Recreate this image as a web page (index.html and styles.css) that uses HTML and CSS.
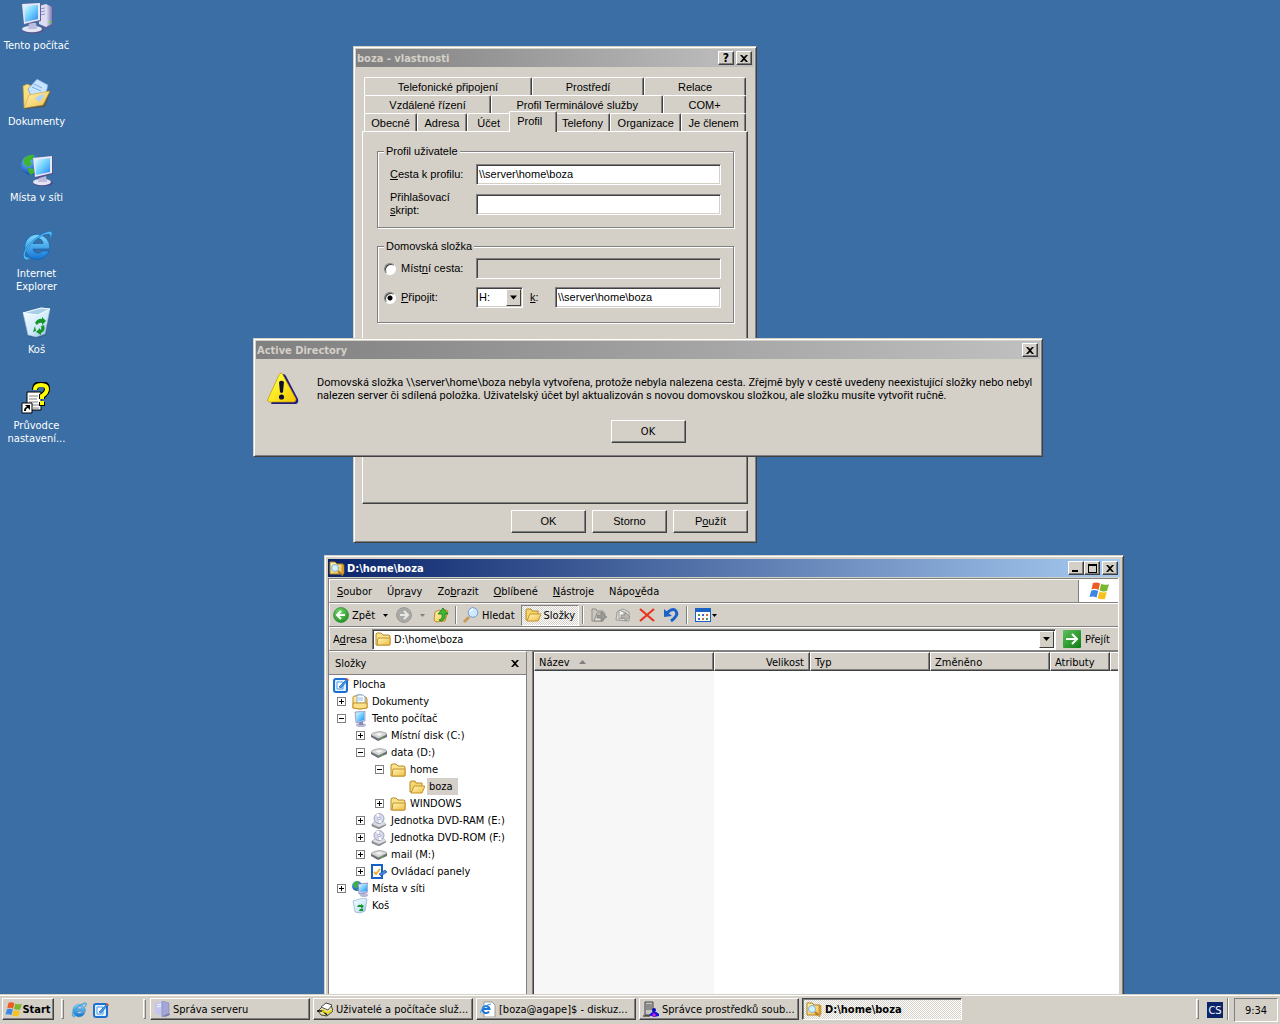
FILE: index.html
```html
<!DOCTYPE html>
<html lang="cs">
<head>
  <meta charset="UTF-8" />
  <meta name="viewport" content="width=device-width, initial-scale=1.0"/>
  <title>Plocha</title>
  <link rel="stylesheet" href="styles.css">
</head>
<body>
  <!-- Icon set -->
  <svg class="sprite" aria-hidden="true">
    <defs>
      <linearGradient id="g-screen" x1="0" y1="0" x2="1" y2="1">
        <stop offset="0" stop-color="#e4fbff"/><stop offset="0.5" stop-color="#6fd0ff"/><stop offset="1" stop-color="#2a86ee"/>
      </linearGradient>
      <linearGradient id="g-case" x1="0" y1="0" x2="1" y2="0">
        <stop offset="0" stop-color="#e4e4f4"/><stop offset="1" stop-color="#7c7cb4"/>
      </linearGradient>
      <linearGradient id="g-folder" x1="0" y1="0" x2="1" y2="1">
        <stop offset="0" stop-color="#fff6b8"/><stop offset="1" stop-color="#f0bd45"/>
      </linearGradient>
      <linearGradient id="g-ie" x1="0" y1="0" x2="0" y2="1">
        <stop offset="0" stop-color="#7ddcff"/><stop offset="1" stop-color="#1273d2"/>
      </linearGradient>
      <radialGradient id="g-globe" cx="0.35" cy="0.3" r="0.8">
        <stop offset="0" stop-color="#6fc4ff"/><stop offset="1" stop-color="#0a3aa8"/>
      </radialGradient>
      <linearGradient id="g-bin" x1="0" y1="0" x2="1" y2="1">
        <stop offset="0" stop-color="#f6fdff"/><stop offset="0.6" stop-color="#cfeafa"/><stop offset="1" stop-color="#86b8dc"/>
      </linearGradient>
      <linearGradient id="g-warn" x1="0" y1="0" x2="1" y2="1">
        <stop offset="0.2" stop-color="#ffff3c"/><stop offset="1" stop-color="#f6c400"/>
      </linearGradient>
      <linearGradient id="g-go" x1="0" y1="0" x2="1" y2="1">
        <stop offset="0" stop-color="#5cc05c"/><stop offset="1" stop-color="#0d7d12"/>
      </linearGradient>
      <radialGradient id="g-back" cx="0.4" cy="0.3" r="0.8">
        <stop offset="0" stop-color="#7ad86c"/><stop offset="1" stop-color="#158a1c"/>
      </radialGradient>
    </defs>

    <symbol id="computer-big" viewBox="0 0 32 32">
      <path d="M18 3l8-1 6 3v18l-7 4-7-4z" fill="#5c5c98"/>
      <path d="M18 4l7-2v23l-7-3z" fill="#dcdcf2"/>
      <path d="M25 2l6 3v17l-6 3z" fill="url(#g-case)"/>
      <path d="M19 7l5-1M19 10l5-1M19 13l5-1" stroke="#9292bd"/>
      <circle cx="29" cy="20" r="1.200" fill="#5fe02c"/>
      <ellipse cx="12" cy="28" rx="11" ry="3.500" fill="#55558c"/>
      <ellipse cx="11" cy="27" rx="10" ry="3.200" fill="#e4e4f4"/>
      <path d="M8 21h7l1 6H7z" fill="#bcbcdc"/>
      <path d="M1 2l19-1v18l-17 4z" fill="#62629c"/>
      <path d="M1 2l18-1v17L3 22z" fill="#e8e8f8"/>
      <path d="M3 4l14-1v14L4 20z" fill="url(#g-screen)"/>
    </symbol>
    <symbol id="documents-big" viewBox="0 0 32 32">
      <path d="M3 31L2 9l4-2 5 2 16 4 3-1-6 17z" fill="#604a1c" opacity=".6"/>
      <path d="M2 8l4-2 5 2v3l13 1v12L3 30z" fill="#f9dd80" stroke="#b88d2e" stroke-width=".6"/>
      <path d="M7 11l9-10 11 6-4 17-9 1z" fill="#c8e4ff" stroke="#5e9be0" stroke-width=".7"/>
      <path d="M13 6l8 4M11 9l9 4" stroke="#70aef0"/>
      <path d="M3 30l5-13 21-4-7 14z" fill="url(#g-folder)" stroke="#c79c35" stroke-width=".6"/>
      <path d="M14 20l8-4 1 2-5 6z" fill="#a9d4ff"/>
    </symbol>
    <symbol id="network-big" viewBox="0 0 32 32">
      <circle cx="10" cy="11" r="10" fill="url(#g-globe)"/>
      <path d="M2 6q5-6 11-5l-1 4-3 2 2 3-4 3-3-2zM7 14l6 1v4l-3 2q-3-2-3-7zM15 3l4 3-2 5-4-3z" fill="#3fb52d"/>
      <ellipse cx="22" cy="29" rx="10" ry="3.500" fill="#4c4c88"/>
      <ellipse cx="21" cy="28" rx="9" ry="3.200" fill="#e4e4f4"/>
      <path d="M18 22h7l1 6h-9z" fill="#bcbcdc"/>
      <path d="M12 5l20-3v18l-17 5z" fill="#54548e"/>
      <path d="M12 4l19-2v17l-17 4z" fill="#e8e8f8"/>
      <path d="M14 6l15-2v14l-14 3z" fill="url(#g-screen)"/>
    </symbol>
    <symbol id="ie" viewBox="0 0 32 32">
      <path d="M28 19H12a5 5 0 0 0 9 2h7A12.500 12.500 0 1 1 28.500 19zM12 13.500h10a5 5 0 0 0-10 0z" fill="url(#g-ie)" stroke="#0c5cae" stroke-width=".6"/>
      <path d="M5 30C-2 26 6 14 15 8 23 2 32-1 31 4c0 2-1 4-3 6 2-4 2-6-1-6C20 4 4 17 4 25c0 2 2 3 5 2-1 2-2 3-4 3z" fill="#58bdf5" stroke="#1170c2" stroke-width=".6"/>
    </symbol>
    <symbol id="bin-big" viewBox="0 0 32 32">
      <path d="M8 31L3 9 29 5l-4 24-9 3z" fill="#28486e" opacity=".5"/>
      <path d="M2 7l18-5 9 1-5 25-9 3-8-2z" fill="url(#g-bin)" stroke="#8fb6d2" stroke-width=".6"/>
      <path d="M2 7l18-5 9 1-12 6z" fill="#a9cfe8" stroke="#f4fcff"/>
      <path d="M14 17q3-5 7-4v-2l4 4-4 4v-2q-3-1-5 2zM23 19q2 6-3 8v2l-5-3 4-4v2q2-1 1-4zM14 20l1 5-3 1z" fill="#18952a"/>
    </symbol>
    <symbol id="wizard" viewBox="0 0 32 32">
      <path d="M6 10h14v18H6z" fill="#fff" stroke="#000"/>
      <path d="M8 14h9M8 17h8M8 20h9M8 23h10M12 26h6" stroke="#808080"/>
      <path d="M14 8q0-6 6-6t6 5q0 4-5 7v3M21 20v4" fill="none" stroke="#000" stroke-width="6"/>
      <path d="M14 8q0-5 6-5t6 4q0 4-5 7v3M21 19v4" fill="none" stroke="#ffff00" stroke-width="4"/>
      <path d="M1 21h10v10H1z" fill="#fff" stroke="#000"/>
      <path d="M3 29q0-4 3-4l-2-2h5v5l-2-2q-2 0-2 3z" fill="#000"/>
    </symbol>
    <symbol id="warning" viewBox="0 0 32 32">
      <path d="M16 2q2 0 3 2l12 23q1 4-2 5H4z" fill="#1c1c80"/>
      <path d="M12 3q2-4 4 0l13 24q0 3-2 3H2q-2-1-1-3z" fill="url(#g-warn)" stroke="#c09000" stroke-width=".7"/>
      <path d="M12 10q2.500-2.500 5 0l-1 10q-1.500 2-3 0z" fill="#101030"/>
      <circle cx="14.500" cy="25" r="2.600" fill="#101030"/>
    </symbol>

    <symbol id="folder" viewBox="0 0 16 16">
      <path d="M1 14V3l1-1h4l2 2h6l1 1v9H2z" fill="#fbe28a" stroke="#b28a2c"/>
      <path d="M3 7h12v6l-1 1H2z" fill="url(#g-folder)" stroke="#c4942a"/>
    </symbol>
    <symbol id="folder-open" viewBox="0 0 16 16">
      <path d="M1 13V3l1-1h4l1 2h6v9z" fill="#f6d56e" stroke="#b28a2c"/>
      <path d="M2 14l3-7h11l-3 7z" fill="url(#g-folder)" stroke="#c4942a"/>
    </symbol>
    <symbol id="folder-search" viewBox="0 0 16 16">
      <path d="M1 14V2h5l2 2h6v10z" fill="url(#g-folder)" stroke="#b0801e"/>
      <circle cx="6" cy="8" r="3.500" fill="#d4f0ff" stroke="#7cb4dc"/>
      <path d="M13 5h2v8l-2 3z" fill="#e8a630" stroke="#b0801e" stroke-width=".6"/>
      <path d="M9 11l3 3" stroke="#b0782a" stroke-width="2"/>
    </symbol>
    <symbol id="desktop" viewBox="0 0 16 16">
      <rect x="1" y="2" width="13" height="13" rx="2" fill="#e2f2ff" stroke="#1d6fd2" stroke-width="2"/>
      <path d="M4 5h6v7H4z" fill="#fff" stroke="#4b9be8"/>
      <path d="M6 10l8-8 1 1-7 8z" fill="#3d9ff2" stroke="#0a4a9c" stroke-width=".6"/>
      <path d="M14 1l2 2-1 1-2-2z" fill="#e0522c"/>
    </symbol>
    <symbol id="documents" viewBox="0 0 16 16">
      <path d="M1 14V3q0-1 2-1h1l1-1h5v2h4l1 2v9q-7 2-14 0z" fill="url(#g-folder)" stroke="#bc8c26"/>
      <path d="M5 1h6l2 2v6H5z" fill="#fff" stroke="#6b9ade" stroke-width=".8"/>
      <path d="M6 4h5M6 6h5" stroke="#8cb8ee"/>
      <path d="M1 9h14v5q-7 2-14 0z" fill="#fbe08a" stroke="#c4942a"/>
    </symbol>
    <symbol id="computer" viewBox="0 0 16 16">
      <ellipse cx="9" cy="14" rx="5" ry="2" fill="#b8b8d4"/>
      <path d="M7 10h4v4H7z" fill="#8888b0"/>
      <path d="M3 1l10-1v10l-9 2z" fill="#c8ccec" stroke="#7c80b4" stroke-width=".6"/>
      <path d="M4 2l8-1v8l-7 2z" fill="url(#g-screen)"/>
    </symbol>
    <symbol id="network" viewBox="0 0 16 16">
      <circle cx="5" cy="5" r="5" fill="url(#g-globe)"/>
      <path d="M1 3q3-4 6-2L5 4l1 2-3 1zM4 8l3 0-1 2z" fill="#3fb52d"/>
      <ellipse cx="12" cy="14" rx="4" ry="2" fill="#b8b8d4"/>
      <path d="M6 3l10-1v9l-9 2z" fill="#c8ccec" stroke="#6a6ea8" stroke-width=".6"/>
      <path d="M7 4l8-1v7l-7 1z" fill="url(#g-screen)"/>
    </symbol>
    <symbol id="drive" viewBox="0 0 16 16">
      <path d="M0 7v2l7 4 9-4V6z" fill="#6c6f72"/>
      <path d="M0 7q0-1 2-2l4-1q2-1 6 0l3 1q1 1 0 2l-6 3q-1 1-3 0z" fill="#d4d6d8" stroke="#777" stroke-width=".5"/>
      <path d="M4 6l4-1 4 1-4 2z" fill="#f4f4f4"/>
      <circle cx="11" cy="10" r=".8" fill="#48d828"/>
    </symbol>
    <symbol id="dvd" viewBox="0 0 16 16">
      <path d="M1 11l3-2h9l2 3-7 4-7-3z" fill="#94969c" stroke="#63656a" stroke-width=".5"/>
      <path d="M1 11l3-2h9l2 2-7 3z" fill="#dcdde2"/>
      <circle cx="8" cy="5.500" r="5" fill="#d6d8f0" stroke="#8486a4" stroke-width=".7"/>
      <path d="M8 5.500L5 1.500l3-1zM8 5.500l3 4-3 .8z" fill="#fff"/>
      <circle cx="8" cy="5.500" r="1.300" fill="#fff" stroke="#8486a4" stroke-width=".6"/>
    </symbol>
    <symbol id="panels" viewBox="0 0 16 16">
      <rect x="1" y="1" width="10" height="13" fill="#fff" stroke="#1761c4" stroke-width="2"/>
      <path d="M3 8l2 2 4-5" fill="none" stroke="#eeb42c" stroke-width="2"/>
      <path d="M8 10l6-4 2 2-6 4z" fill="#3c8ae8" stroke="#0b3f90" stroke-width=".6"/>
    </symbol>
    <symbol id="bin" viewBox="0 0 16 16">
      <path d="M1 3l10-3 4 1-2 12-5 2-5-1z" fill="url(#g-bin)" stroke="#8db2cc" stroke-width=".7"/>
      <path d="M5 9q1-3 4-2V6l3 2-3 3V9zM7 13l1-2h2l1-1v3z" fill="#18952a"/>
    </symbol>

    <symbol id="back" viewBox="0 0 16 16">
      <circle cx="8" cy="8" r="7.500" fill="url(#g-back)" stroke="#2f8a35" stroke-width=".7"/>
      <path d="M12 8H5M8 4L4 8l4 4" fill="none" stroke="#fff" stroke-width="2"/>
    </symbol>
    <symbol id="forward" viewBox="0 0 16 16">
      <circle cx="8" cy="8" r="7.500" fill="#a9a9a6" stroke="#8e8e8b" stroke-width=".7"/>
      <path d="M4 8h7M8 4l4 4-4 4" fill="none" stroke="#e9e7e2" stroke-width="2"/>
    </symbol>
    <symbol id="up" viewBox="0 0 16 16">
      <path d="M1 13l1-8 4-2 2 1 5-1 2 1-3 10-9 1z" fill="url(#g-folder)" stroke="#bb8d27"/>
      <path d="M6 13q4-1 3-6H5l5-6 5 6h-3q1 6-4 7z" fill="#3fb636" stroke="#157a1c" stroke-width=".8"/>
    </symbol>
    <symbol id="search" viewBox="0 0 16 16">
      <path d="M6 10l-5 5" stroke="#c89a5c" stroke-width="3"/>
      <circle cx="10" cy="5.500" r="4.800" fill="#cdeaff" stroke="#6f9ccc"/>
      <path d="M7 5q1-3 3-3" stroke="#fff" fill="none" stroke-width="1.500"/>
    </symbol>
    <symbol id="move-to" viewBox="0 0 16 16">
      <path d="M1 14V2h4l1 2h6v10z" fill="#c9c6c0" stroke="#8f8d88"/>
      <path d="M3 14l3-8h8l-2 8z" fill="#dddad4" stroke="#8f8d88"/>
      <path d="M6 8h4V5l6 5-6 4v-3H6z" fill="#9a9893" stroke="#7b7975" stroke-width=".6"/>
    </symbol>
    <symbol id="copy-to" viewBox="0 0 16 16">
      <path d="M1 13l1-8 6-3 6 3v9z" fill="#dedbd5" stroke="#9c9a95"/>
      <path d="M4 3l5 2v6l-5 1z" fill="#f3f1ee" stroke="#9c9a95"/>
      <path d="M6 8h4V5l5 5-5 4v-3H6z" fill="#b9b6b0" stroke="#85837e" stroke-width=".7"/>
    </symbol>
    <symbol id="delete" viewBox="0 0 16 16">
      <path d="M1 2l14 12M15 2L1 14" stroke="#e8341c" stroke-width="2.200"/>
    </symbol>
    <symbol id="undo" viewBox="0 0 16 16">
      <path d="M4 6q5-5 8-3 3 3 1 6-2 3-5 5" fill="none" stroke="#1b62c8" stroke-width="3"/>
      <path d="M1 2v8l8-1z" fill="#1b62c8"/>
    </symbol>
    <symbol id="views" viewBox="0 0 16 16">
      <rect x=".5" y="1.500" width="15" height="13" fill="#fff" stroke="#1c62c4"/>
      <path d="M0 1h16v4H0z" fill="#1c62c4"/>
      <path d="M3 7h2v2H3zM11 11h2v2h-2z" fill="#40a04a"/>
      <path d="M7 7h2v2H7zM3 11h2v2H3z" fill="#3b64d8"/>
      <path d="M11 7h2v2h-2zM7 11h2v2H7z" fill="#e06a3a"/>
    </symbol>
    <symbol id="go" viewBox="0 0 18 18">
      <rect width="18" height="18" rx="1" fill="url(#g-go)"/>
      <path d="M3 9h11M9 4l5 5-5 5" fill="none" stroke="#fff" stroke-width="2"/>
    </symbol>
    <symbol id="flag" viewBox="0 0 20 18">
      <path d="M4 1q4-1.500 7 .6L9.500 8Q6 6 2.500 7.500z" fill="#ee5a24"/>
      <path d="M12 2q4 1.500 8 .2L18 9q-4 1-7.300-.6z" fill="#7ab82c"/>
      <path d="M2.200 8.700q3.500-1.500 7 .4L7.500 15.500Q4 14 .5 15z" fill="#3c86e6"/>
      <path d="M10.400 9.500q3.600 1.800 7.300.6L16 17q-4 1-7.300-.8z" fill="#f8c21c"/>
    </symbol>

    <symbol id="server" viewBox="0 0 16 16">
      <path d="M1 2l7-2v15l-7-2z" fill="#c4c6ee"/>
      <path d="M8 0l7 2v11l-7 3z" fill="#a4a6d8" stroke="#8083b8" stroke-width=".6"/>
      <path d="M3 4l4-1M3 6l4-1" stroke="#f2f2ff"/>
      <path d="M9 15l6-3 1 2-5 2z" fill="#7f7fae"/>
    </symbol>
    <symbol id="users" viewBox="0 0 16 16">
      <path d="M1 10l8-8 5 2 2 6-6 5-6-1z" fill="#e6e2a0" stroke="#222" stroke-width=".8"/>
      <path d="M4 6l5-4 6 2-4 5z" fill="#fff" stroke="#333" stroke-width=".8"/>
      <path d="M0 10h6l4 4" fill="none" stroke="#111" stroke-width="1.500"/>
      <path d="M5 10l6 2 4-3" stroke="#e8d800" stroke-width="1.500" fill="none"/>
    </symbol>
    <symbol id="page-ie" viewBox="0 0 16 16">
      <path d="M4 1h8l3 3v12H4z" fill="#fff" stroke="#8a8a8a" stroke-width=".8"/>
      <path d="M9 10.500A3.500 3.500 0 1 1 9.500 8H3" fill="none" stroke="#1d74d8" stroke-width="2"/>
      <path d="M0 12Q3 4 11 3" fill="none" stroke="#3a9af0"/>
    </symbol>
    <symbol id="server-user" viewBox="0 0 16 16">
      <path d="M2 1h8v13H2z" fill="#c4c4c4" stroke="#222" stroke-width=".8"/>
      <path d="M3 4h6M3 6h6M3 8h6" stroke="#555"/>
      <circle cx="11" cy="9" r="2" fill="#0a0ab8"/>
      <path d="M6 14q5-6 10-1v2l-5 1z" fill="#1212e0"/>
      <path d="M9 14l2-2 2 2-2 2z" fill="#e820c8"/>
      <path d="M0 15h7" stroke="#111"/>
    </symbol>

    <symbol id="close" viewBox="0 0 8 7">
      <path d="M0 0h2l2 2 2-2h2L5 3.500 8 7H6L4 5 2 7H0l3-3.500z"/>
    </symbol>
    <symbol id="minimize" viewBox="0 0 8 7"><path d="M0 5h6v2H0z"/></symbol>
    <symbol id="maximize" viewBox="0 0 9 9"><path d="M0 0h9v9H0zM1 2v6h7V2z" fill-rule="evenodd"/></symbol>
    <symbol id="arrow" viewBox="0 0 7 4"><path d="M0 0h7L3.500 4z"/></symbol>
  </svg>

  <main class="desktop">
    <nav class="shortcuts" aria-label="Plocha">
      <a href="#"><svg><use href="#computer-big"/></svg>Tento počítač</a>
      <a href="#"><svg><use href="#documents-big"/></svg>Dokumenty</a>
      <a href="#"><svg><use href="#network-big"/></svg>Místa v síti</a>
      <a href="#"><svg><use href="#ie"/></svg>Internet Explorer</a>
      <a href="#"><svg><use href="#bin-big"/></svg>Koš</a>
      <a href="#"><svg><use href="#wizard"/></svg>Průvodce nastavení...</a>
    </nav>

    <!-- User properties -->
    <section class="window properties" aria-label="boza - vlastnosti">
      <header class="title-bar inactive">
        <h2>boza - vlastnosti</h2>
        <button class="caption-btn" aria-label="Nápověda">?</button>
        <button class="caption-btn" aria-label="Zavřít"><svg class="x"><use href="#close"/></svg></button>
      </header>
      <div class="properties-body">
        <div class="tabs" role="tablist">
          <div class="tab-row">
            <button class="tab" role="tab">Telefonické připojení</button>
            <button class="tab" role="tab">Prostředí</button>
            <button class="tab" role="tab">Relace</button>
          </div>
          <div class="tab-row">
            <button class="tab" role="tab">Vzdálené řízení</button>
            <button class="tab" role="tab">Profil Terminálové služby</button>
            <button class="tab" role="tab">COM+</button>
          </div>
          <div class="tab-row">
            <button class="tab" role="tab">Obecné</button>
            <button class="tab" role="tab">Adresa</button>
            <button class="tab" role="tab">Účet</button>
            <button class="tab selected" role="tab" aria-selected="true">Profil</button>
            <button class="tab" role="tab">Telefony</button>
            <button class="tab" role="tab">Organizace</button>
            <button class="tab" role="tab">Je členem</button>
          </div>
        </div>
        <form class="panel">
          <fieldset>
            <legend>Profil uživatele</legend>
            <div class="field">
              <label for="profile-path"><u>C</u>esta k profilu:</label>
              <input type="text" id="profile-path" value="\\server\home\boza">
            </div>
            <div class="field script-field">
              <label for="script">Přihlašovací <u>s</u>kript:</label>
              <input type="text" id="script">
            </div>
          </fieldset>
          <fieldset class="home-folder">
            <legend>Domovská složka</legend>
            <div class="field">
              <label class="choice"><input type="radio" name="home"> <span>Míst<u>n</u>í cesta:</span></label>
              <input type="text" aria-label="Místní cesta" disabled>
            </div>
            <div class="field">
              <label class="choice"><input type="radio" name="home" checked> <span><u>P</u>řipojit:</span></label>
              <div class="connect">
                <span class="drop-down">
                  <select aria-label="Jednotka"><option>H:</option></select>
                  <svg><use href="#arrow"/></svg>
                </span>
                <label for="share"><u>k</u>:</label>
                <input type="text" id="share" value="\\server\home\boza">
              </div>
            </div>
          </fieldset>
        </form>
        <div class="buttons">
          <button class="push-btn">OK</button>
          <button class="push-btn">Storno</button>
          <button class="push-btn">P<u>o</u>užít</button>
        </div>
      </div>
    </section>

    <!-- Explorer -->
    <section class="window explorer" aria-label="D:\home\boza">
      <header class="title-bar">
        <svg class="icon"><use href="#folder-search"/></svg>
        <h2>D:\home\boza</h2>
        <span class="caption-pair">
          <button class="caption-btn" aria-label="Minimalizovat"><svg class="x"><use href="#minimize"/></svg></button>
          <button class="caption-btn" aria-label="Maximalizovat"><svg class="box"><use href="#maximize"/></svg></button>
        </span>
        <button class="caption-btn" aria-label="Zavřít"><svg class="x"><use href="#close"/></svg></button>
      </header>
      <div class="client">
        <div class="bar menu-bar">
          <button><u>S</u>oubor</button>
          <button>Úpr<u>a</u>vy</button>
          <button>Zo<u>b</u>razit</button>
          <button><u>O</u>blíbené</button>
          <button><u>N</u>ástroje</button>
          <button>Nápo<u>v</u>ěda</button>
          <span class="throbber"><svg><use href="#flag"/></svg></span>
        </div>
        <div class="bar tool-bar">
          <button class="tool"><svg class="icon"><use href="#back"/></svg>Zpět</button>
          <button class="more" aria-label="Historie zpět"><svg><use href="#arrow"/></svg></button>
          <button class="tool" aria-label="Vpřed"><svg class="icon"><use href="#forward"/></svg></button>
          <button class="more off" aria-label="Historie vpřed"><svg><use href="#arrow"/></svg></button>
          <button class="tool" aria-label="Nahoru"><svg class="icon"><use href="#up"/></svg></button>
          <span class="sep"></span>
          <button class="tool"><svg class="icon"><use href="#search"/></svg>Hledat</button>
          <button class="tool pressed"><svg class="icon"><use href="#folder-open"/></svg>Složky</button>
          <span class="sep"></span>
          <button class="tool edit" aria-label="Přesunout do"><svg class="icon"><use href="#move-to"/></svg></button>
          <button class="tool edit" aria-label="Kopírovat do"><svg class="icon"><use href="#copy-to"/></svg></button>
          <button class="tool edit" aria-label="Odstranit"><svg class="icon"><use href="#delete"/></svg></button>
          <button class="tool edit" aria-label="Zpět akci"><svg class="icon"><use href="#undo"/></svg></button>
          <span class="sep"></span>
          <button class="tool edit" aria-label="Zobrazení"><svg class="icon"><use href="#views"/></svg><svg class="tip"><use href="#arrow"/></svg></button>
        </div>
        <div class="bar address-bar">
          <label for="address">A<u>d</u>resa</label>
          <span class="address-box">
            <svg class="icon"><use href="#folder"/></svg>
            <input type="text" id="address" value="D:\home\boza">
            <button aria-label="Seznam adres"><svg><use href="#arrow"/></svg></button>
          </span>
          <button class="go"><svg><use href="#go"/></svg>Přejít</button>
        </div>
        <div class="panes">
          <aside class="folders">
            <div class="folders-head">
              <span>Složky</span>
              <button aria-label="Zavřít panel"><svg><use href="#close"/></svg></button>
            </div>
            <ul class="tree">
              <li>
                <div class="node"><svg class="icon"><use href="#desktop"/></svg><span>Plocha</span></div>
                <ul>
                  <li><div class="node"><button class="plus" aria-label="Rozbalit"></button><svg class="icon"><use href="#documents"/></svg><span>Dokumenty</span></div></li>
                  <li>
                    <div class="node"><button class="minus" aria-label="Sbalit"></button><svg class="icon"><use href="#computer"/></svg><span>Tento počítač</span></div>
                    <ul>
                      <li><div class="node"><button class="plus" aria-label="Rozbalit"></button><svg class="icon"><use href="#drive"/></svg><span>Místní disk (C:)</span></div></li>
                      <li>
                        <div class="node"><button class="minus" aria-label="Sbalit"></button><svg class="icon"><use href="#drive"/></svg><span>data (D:)</span></div>
                        <ul>
                          <li>
                            <div class="node"><button class="minus" aria-label="Sbalit"></button><svg class="icon"><use href="#folder"/></svg><span>home</span></div>
                            <ul>
                              <li><div class="node leaf"><svg class="icon"><use href="#folder-open"/></svg><span class="current">boza</span></div></li>
                            </ul>
                          </li>
                          <li><div class="node"><button class="plus" aria-label="Rozbalit"></button><svg class="icon"><use href="#folder"/></svg><span>WINDOWS</span></div></li>
                        </ul>
                      </li>
                      <li><div class="node"><button class="plus" aria-label="Rozbalit"></button><svg class="icon"><use href="#dvd"/></svg><span>Jednotka DVD-RAM (E:)</span></div></li>
                      <li><div class="node"><button class="plus" aria-label="Rozbalit"></button><svg class="icon"><use href="#dvd"/></svg><span>Jednotka DVD-ROM (F:)</span></div></li>
                      <li><div class="node"><button class="plus" aria-label="Rozbalit"></button><svg class="icon"><use href="#drive"/></svg><span>mail (M:)</span></div></li>
                      <li><div class="node"><button class="plus" aria-label="Rozbalit"></button><svg class="icon"><use href="#panels"/></svg><span>Ovládací panely</span></div></li>
                    </ul>
                  </li>
                  <li><div class="node"><button class="plus" aria-label="Rozbalit"></button><svg class="icon"><use href="#network"/></svg><span>Místa v síti</span></div></li>
                  <li><div class="node leaf"><svg class="icon"><use href="#bin"/></svg><span>Koš</span></div></li>
                </ul>
              </li>
            </ul>
          </aside>
          <div class="files">
            <table>
              <thead>
                <tr>
                  <th class="col-name">Název <svg><use href="#arrow"/></svg></th>
                  <th class="col-size">Velikost</th>
                  <th class="col-type">Typ</th>
                  <th class="col-date">Změněno</th>
                  <th class="col-attr">Atributy</th>
                  <th class="col-rest"></th>
                </tr>
              </thead>
              <tbody>
                <tr><td class="sorted"></td><td></td><td></td><td></td><td></td><td></td></tr>
              </tbody>
            </table>
          </div>
        </div>
      </div>
    </section>

    <!-- Warning -->
    <section class="window message" role="alertdialog" aria-label="Active Directory">
      <header class="title-bar inactive">
        <h2>Active Directory</h2>
        <button class="caption-btn" aria-label="Zavřít"><svg class="x"><use href="#close"/></svg></button>
      </header>
      <div class="message-body">
        <svg><use href="#warning"/></svg>
        <p>Domovská složka \\server\home\boza nebyla vytvořena, protože nebyla nalezena cesta. Zřejmě byly v cestě uvedeny neexistující složky nebo nebyl<br>nalezen server či sdílená položka. Uživatelský účet byl aktualizován s novou domovskou složkou, ale složku musíte vytvořit ručně.</p>
      </div>
      <div class="message-buttons">
        <button class="push-btn">OK</button>
      </div>
    </section>
  </main>

  <footer class="taskbar">
    <button class="start"><svg><use href="#flag"/></svg>Start</button>
    <span class="grip"></span>
    <div class="quick">
      <a href="#" aria-label="Internet Explorer"><svg class="icon"><use href="#ie"/></svg></a>
      <a href="#" aria-label="Zobrazit plochu"><svg class="icon"><use href="#desktop"/></svg></a>
    </div>
    <span class="grip"></span>
    <div class="tasks">
      <button class="task"><svg class="icon"><use href="#server"/></svg><span>Správa serveru</span></button>
      <button class="task"><svg class="icon"><use href="#users"/></svg><span>Uživatelé a počítače služ...</span></button>
      <button class="task"><svg class="icon"><use href="#page-ie"/></svg><span>[boza@agape]$ - diskuz...</span></button>
      <button class="task"><svg class="icon"><use href="#server-user"/></svg><span>Správce prostředků soub...</span></button>
      <button class="task active"><svg class="icon"><use href="#folder-search"/></svg><span>D:\home\boza</span></button>
    </div>
    <span class="grip"></span>
    <button class="lang">CS</button>
    <span class="divider"></span>
    <div class="clock">9:34</div>
  </footer>
</body>
</html>
```
FILE: styles.css
```css
* {
  box-sizing: border-box;
}

body {
  margin: 0;
  height: 100vh;
  display: flex;
  flex-direction: column;
  overflow: hidden;
  background: #3a6ea5;
  color: #000;
  font: 11px/13px "DejaVu Sans Condensed", Tahoma, sans-serif;
  cursor: default;
}

button, input, select {
  font: inherit;
  color: inherit;
  margin: 0;
}

button {
  display: inline-flex;
  align-items: center;
  justify-content: center;
  padding: 0;
  border: 0;
  background: none;
  white-space: nowrap;
}

ul {
  list-style: none;
  margin: 0;
  padding: 0;
}

svg {
  flex: none;
}

.sprite {
  position: absolute;
  width: 0;
  height: 0;
}

.icon {
  width: 16px;
  height: 16px;
}

/* Desktop */
.desktop {
  position: relative;
  flex: 1;
  overflow: hidden;
}

.shortcuts {
  display: grid;
  grid-auto-rows: 76px;
  width: 73px;
  padding-top: 2px;
}

.shortcuts a {
  display: flex;
  flex-direction: column;
  align-items: center;
  gap: 5px;
  color: #fff;
  text-align: center;
  text-decoration: none;
}

.shortcuts svg {
  width: 32px;
  height: 32px;
}

/* Windows */
.window {
  position: absolute;
  display: flex;
  flex-direction: column;
  padding: 1px;
  background: #d4d0c8;
  border: 1px solid;
  border-color: #d4d0c8 #404040 #404040 #d4d0c8;
  box-shadow: inset 1px 1px 0 #fff, inset -1px -1px 0 #808080;
}

.title-bar {
  display: flex;
  align-items: center;
  gap: 2px;
  flex: none;
  height: 18px;
  margin: 1px;
  padding: 0 2px 0 1px;
  color: #fff;
  background: linear-gradient(to right, #0a246a, #a6caf0);
}

.title-bar.inactive {
  color: #d4d0c8;
  background: linear-gradient(to right, #808080, #c0c0c0);
}

.title-bar h2 {
  flex: 1;
  margin: 0;
  font-size: 11px;
  line-height: 13px;
  font-weight: bold;
}

.caption-btn,
.push-btn,
.start,
.task {
  background: #d4d0c8;
  border: 1px solid;
  border-color: #fff #404040 #404040 #fff;
  box-shadow: inset -1px -1px 0 #808080;
}

.caption-btn {
  width: 16px;
  height: 14px;
  color: #000;
  font-weight: bold;
  font-size: 12px;
}

.caption-btn .x {
  width: 8px;
  height: 7px;
}

.caption-btn .box {
  width: 9px;
  height: 9px;
}

.caption-pair {
  display: flex;
}

.push-btn {
  width: 75px;
  height: 23px;
}

/* User properties */
.properties {
  left: 353px;
  top: 46px;
  width: 404px;
  font-family: "Liberation Sans", Arial, sans-serif;
}

.properties .title-bar {
  font-family: "DejaVu Sans Condensed", Tahoma, sans-serif;
}

.properties-body {
  padding: 9px 7px 8px;
}

.tab-row {
  display: flex;
  height: 18px;
  margin: 0 2px;
}

.tab {
  flex: 1 0 auto;
  min-width: 44px;
  padding-top: 2px;
  background: #d4d0c8;
  border: 1px solid;
  border-color: #fff #404040 transparent #fff;
  border-bottom: 0;
  border-radius: 2px 2px 0 0;
  box-shadow: inset -1px 0 0 #808080;
}

.tab.selected {
  position: relative;
  min-width: 48px;
  height: 21px;
  margin: -2px -2px 0;
  padding: 0 6px 2px 0;
}

.panel {
  min-height: 373px;
  padding: 13px 13px 0 14px;
  border: 1px solid;
  border-color: #fff #404040 #404040 #fff;
  box-shadow: inset -1px -1px 0 #808080;
}

fieldset {
  margin: 0 0 12px;
  padding: 6px 12px 10px;
  min-width: 0;
  border: 1px solid #808080;
  box-shadow: 1px 1px 0 #fff, inset 1px 1px 0 #fff;
}

fieldset.home-folder {
  padding: 5px 12px 14px 6px;
}

legend {
  margin-left: -6px;
  padding: 0 2px;
  background: #d4d0c8;
}

.home-folder legend {
  margin-left: 0;
}

.field {
  display: grid;
  grid-template-columns: 86px 1fr;
  align-items: center;
}

.field + .field {
  margin-top: 8px;
}

.field + .script-field {
  margin-top: 6px;
}

.home-folder .field {
  grid-template-columns: 92px 1fr;
}

input[type="text"],
select {
  min-width: 0;
  width: 100%;
  height: 21px;
  padding: 0 2px 2px;
  background: #fff;
  border: 1px solid;
  border-color: #808080 #fff #fff #808080;
  border-radius: 0;
  outline: 0;
  box-shadow: inset 1px 1px 0 #404040, inset -1px -1px 0 #d4d0c8;
}

input[type="text"]:disabled {
  background: #d4d0c8;
}

input[type="radio"] {
  appearance: none;
  width: 12px;
  height: 12px;
  border: 1px solid;
  border-color: #808080 #fff #fff #808080;
  border-radius: 50%;
  background: #fff;
  box-shadow: inset 1px 1px 0 #404040;
}

input[type="radio"]:checked {
  background: radial-gradient(circle, #000 2px, #fff 3px);
}

.choice {
  display: flex;
  align-items: center;
  gap: 5px;
}

.connect {
  display: grid;
  grid-template-columns: 47px 18px 1fr;
  gap: 7px;
  align-items: center;
}

.drop-down {
  position: relative;
  display: flex;
}

.drop-down select {
  appearance: none;
  padding-bottom: 0;
}

.drop-down svg {
  position: absolute;
  top: 2px;
  right: 2px;
  width: 15px;
  height: 17px;
  padding: 5px 3px;
  background: #d4d0c8;
  border: 1px solid;
  border-color: #fff #404040 #404040 #fff;
  pointer-events: none;
}

.buttons {
  display: flex;
  justify-content: flex-end;
  gap: 6px;
  margin-top: 6px;
}

/* Warning message */
.message {
  left: 253px;
  top: 338px;
  width: 790px;
}

.message-body {
  display: flex;
  gap: 18px;
  padding: 12px 12px 0;
}

.message-body svg {
  width: 32px;
  height: 32px;
}

.message-body p {
  margin: 4px 0 0;
  font-family: Roboto, Tahoma, sans-serif;
  white-space: nowrap;
}

.message-buttons {
  display: flex;
  justify-content: center;
  padding: 16px 0 12px;
}

/* Explorer */
.explorer {
  left: 324px;
  top: 555px;
  bottom: -8px;
  width: 800px;
  padding: 2px;
}

.client {
  flex: 1;
  display: flex;
  flex-direction: column;
  margin: 0 2px 0 1px;
  border-left: 1px solid #808080;
  border-right: 1px solid #fff;
}

.bar {
  display: flex;
  align-items: center;
  flex: none;
  height: 24px;
  padding: 1px 0 0 1px;
  border-top: 1px solid #808080;
  box-shadow: inset 1px 1px 0 #fff;
}

.menu-bar {
  gap: 15px;
  padding-left: 8px;
}

.throbber {
  display: flex;
  align-items: center;
  justify-content: center;
  align-self: stretch;
  width: 40px;
  margin-left: auto;
  background: #fff;
  border-left: 1px solid #808080;
}

.throbber svg {
  width: 20px;
  height: 18px;
}

.tool {
  gap: 3px;
  height: 21px;
  padding: 0 3px;
}

.tool.edit {
  gap: 1px;
  padding: 0 4px;
}

.more {
  width: 15px;
  height: 21px;
}

.more svg,
.tip {
  width: 5px;
  height: 3px;
}

.more.off {
  fill: #808080;
}

.pressed {
  margin-left: 3px;
  border: 1px solid;
  border-color: #808080 #fff #fff #808080;
}

.pressed,
.task.active {
  background: repeating-conic-gradient(#fff 0 25%, #d4d0c8 0 50%) 0 0 / 2px 2px;
}

.sep {
  width: 2px;
  height: 18px;
  margin: 0 3px;
  border-left: 1px solid #808080;
  border-right: 1px solid #fff;
}

.address-bar {
  padding: 1px 8px 0 4px;
  gap: 5px;
}

.address-box {
  flex: 1;
  display: flex;
  align-items: center;
  height: 21px;
  padding: 1px 1px 1px 2px;
  background: #fff;
  border: 1px solid;
  border-color: #808080 #fff #fff #808080;
  box-shadow: inset 1px 1px 0 #404040;
}

.address-box input[type="text"] {
  height: 17px;
  padding: 0 3px;
  border: 0;
  box-shadow: none;
}

.address-box button {
  flex: none;
  width: 15px;
  height: 17px;
  background: #d4d0c8;
  border: 1px solid;
  border-color: #fff #404040 #404040 #fff;
}

.address-box button svg {
  width: 7px;
  height: 4px;
}

.go {
  gap: 4px;
  padding-left: 2px;
}

.go svg {
  width: 18px;
  height: 18px;
}

.panes {
  flex: 1;
  display: grid;
  grid-template-columns: 198px 1fr;
  column-gap: 5px;
  border-top: 1px solid #808080;
}

.folders {
  background: #fff;
  border-right: 1px solid #808080;
  border-top: 1px solid #fff;
}

.folders-head {
  display: flex;
  align-items: center;
  justify-content: space-between;
  height: 23px;
  padding: 0 7px 0 6px;
  background: #d4d0c8;
  border-bottom: 1px solid #808080;
}

.folders-head svg {
  width: 8px;
  height: 7px;
}

.tree {
  padding: 1px 0 0 4px;
}

.tree ul ul {
  padding-left: 19px;
}

.node {
  display: flex;
  align-items: center;
  height: 17px;
  white-space: nowrap;
}

.node.leaf {
  padding-left: 19px;
}

.node button {
  flex: none;
  width: 9px;
  height: 9px;
  margin: 0 6px 0 4px;
  border: 1px solid #808080;
  background: linear-gradient(#000, #000) center / 5px 1px no-repeat;
}

.node .plus {
  background: linear-gradient(#000, #000) center / 5px 1px no-repeat, linear-gradient(#000, #000) center / 1px 5px no-repeat;
}

.node span {
  margin-left: 2px;
  padding: 2px;
}

.node .current {
  padding-right: 5px;
  background: #d4d0c8;
}

.files {
  background: #fff;
  border: 1px solid;
  border-color: #808080 transparent transparent #808080;
  border-right: 0;
  box-shadow: inset 1px 0 0 #404040;
  padding-left: 1px;
}

.files table {
  width: 100%;
  height: 100%;
  table-layout: fixed;
  border-collapse: separate;
  border-spacing: 0;
}

.files th {
  height: 19px;
  padding: 1px 5px 0 4px;
  font-weight: normal;
  text-align: left;
  background: #d4d0c8;
  border: 1px solid;
  border-color: #fff #404040 #404040 #fff;
  box-shadow: inset -1px -1px 0 #808080;
}

.files th svg {
  width: 7px;
  height: 4px;
  margin: 0 0 2px 6px;
  fill: #808080;
  transform: rotate(180deg);
}

.files td {
  padding: 0;
}

.files .sorted {
  background: #f7f7f7;
}

.files .col-name {
  width: 180px;
}

.files .col-size {
  width: 96px;
  text-align: right;
}

.files .col-type,
.files .col-date {
  width: 120px;
}

.files .col-attr {
  width: 60px;
}

.files .col-rest {
  border-right: 0;
  box-shadow: inset 0 -1px 0 #808080;
}

/* Taskbar */
.taskbar {
  position: relative;
  display: flex;
  align-items: flex-start;
  flex: none;
  height: 30px;
  padding: 3px 2px 0;
  background: #d4d0c8;
  border-top: 1px solid #d4d0c8;
  box-shadow: inset 0 1px 0 #fff;
}

.start {
  height: 22px;
  width: 52px;
  font-weight: bold;
}

.start svg {
  width: 17px;
  height: 15px;
}

.grip {
  width: 3px;
  height: 20px;
  margin: 1px 6px 0 7px;
  background: #d4d0c8;
  border: 1px solid;
  border-color: #fff #808080 #808080 #fff;
}

.quick {
  display: flex;
  gap: 6px;
  width: 73px;
  padding: 4px 0 0 1px;
}

.quick + .grip {
  margin: 1px 4px 0 0;
}

.tasks {
  flex: 1;
  display: flex;
  gap: 3px;
  min-width: 0;
}

.task {
  flex: 0 1 160px;
  justify-content: flex-start;
  min-width: 0;
  height: 22px;
  gap: 3px;
  padding: 0 3px;
}

.task span {
  overflow: hidden;
}

.task.active {
  font-weight: bold;
  border-color: #404040 #fff #fff #404040;
  box-shadow: inset 1px 1px 0 #808080;
}

.lang {
  width: 16px;
  height: 16px;
  margin: 4px 4px 0 2px;
  color: #fff;
  background: #0a246a;
}

.divider {
  width: 2px;
  height: 22px;
  margin-right: 5px;
  border-left: 1px solid #808080;
  border-right: 1px solid #fff;
}

.clock {
  width: 44px;
  height: 24px;
  line-height: 23px;
  text-align: center;
  border: 1px solid;
  border-color: #808080 #fff #fff #808080;
}
```
